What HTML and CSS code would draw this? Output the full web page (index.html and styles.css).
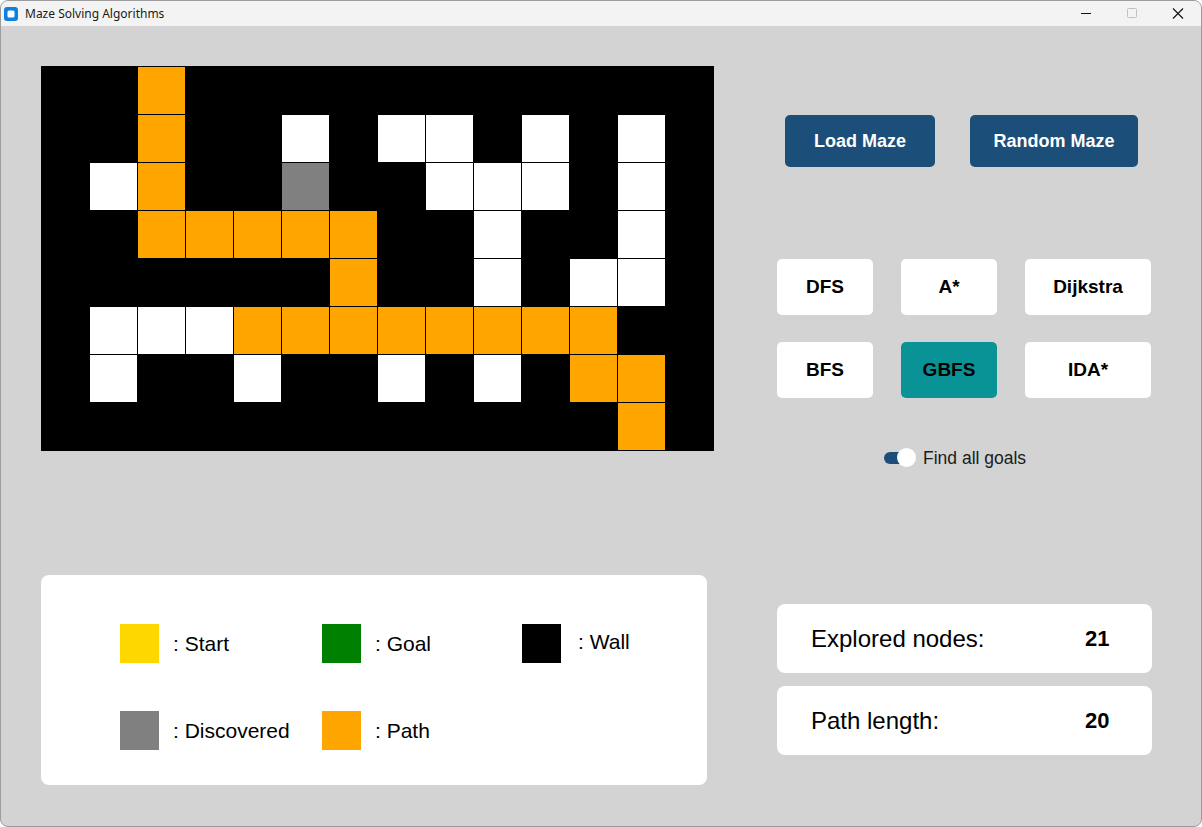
FILE: index.html
```html
<!DOCTYPE html>
<html>
<head>
<meta charset="utf-8">
<title>Maze Solving Algorithms</title>
<link rel="stylesheet" href="styles.css">
</head>
<body>
<div class="window">
  <div class="titlebar">
    <div class="app">
      <svg class="app-icon" width="14" height="14" viewBox="0 0 14 14">
        <rect x="0" y="0" width="14" height="14" rx="3" fill="#0f7fe0"/>
        <rect x="3.5" y="3.5" width="7" height="7" rx="1.5" fill="#ffffff"/>
      </svg>
      <span class="app-title">Maze Solving Algorithms</span>
    </div>
    <div class="controls">
      <svg class="ctl" width="46" height="25" viewBox="0 0 46 25"><line x1="18" y1="12.5" x2="28" y2="12.5" stroke="#111" stroke-width="1"/></svg>
      <svg class="ctl" width="46" height="25" viewBox="0 0 46 25"><rect x="18.5" y="7.5" width="9" height="9" rx="1" fill="none" stroke="#c2c2c2" stroke-width="1"/></svg>
      <svg class="ctl" width="46" height="25" viewBox="0 0 46 25"><path d="M18 7.5 L28 17.5 M28 7.5 L18 17.5" stroke="#111" stroke-width="1.1"/></svg>
    </div>
  </div>
  <div class="content">
    <div class="left">
      <div class="maze">
        <div class="c b"></div><div class="c b"></div><div class="c o"></div><div class="c b"></div><div class="c b"></div><div class="c b"></div><div class="c b"></div><div class="c b"></div><div class="c b"></div><div class="c b"></div><div class="c b"></div><div class="c b"></div><div class="c b"></div><div class="c b"></div>
        <div class="c b"></div><div class="c b"></div><div class="c o"></div><div class="c b"></div><div class="c b"></div><div class="c w"></div><div class="c b"></div><div class="c w"></div><div class="c w"></div><div class="c b"></div><div class="c w"></div><div class="c b"></div><div class="c w"></div><div class="c b"></div>
        <div class="c b"></div><div class="c w"></div><div class="c o"></div><div class="c b"></div><div class="c b"></div><div class="c g"></div><div class="c b"></div><div class="c b"></div><div class="c w"></div><div class="c w"></div><div class="c w"></div><div class="c b"></div><div class="c w"></div><div class="c b"></div>
        <div class="c b"></div><div class="c b"></div><div class="c o"></div><div class="c o"></div><div class="c o"></div><div class="c o"></div><div class="c o"></div><div class="c b"></div><div class="c b"></div><div class="c w"></div><div class="c b"></div><div class="c b"></div><div class="c w"></div><div class="c b"></div>
        <div class="c b"></div><div class="c b"></div><div class="c b"></div><div class="c b"></div><div class="c b"></div><div class="c b"></div><div class="c o"></div><div class="c b"></div><div class="c b"></div><div class="c w"></div><div class="c b"></div><div class="c w"></div><div class="c w"></div><div class="c b"></div>
        <div class="c b"></div><div class="c w"></div><div class="c w"></div><div class="c w"></div><div class="c o"></div><div class="c o"></div><div class="c o"></div><div class="c o"></div><div class="c o"></div><div class="c o"></div><div class="c o"></div><div class="c o"></div><div class="c b"></div><div class="c b"></div>
        <div class="c b"></div><div class="c w"></div><div class="c b"></div><div class="c b"></div><div class="c w"></div><div class="c b"></div><div class="c b"></div><div class="c w"></div><div class="c b"></div><div class="c w"></div><div class="c b"></div><div class="c o"></div><div class="c o"></div><div class="c b"></div>
        <div class="c b"></div><div class="c b"></div><div class="c b"></div><div class="c b"></div><div class="c b"></div><div class="c b"></div><div class="c b"></div><div class="c b"></div><div class="c b"></div><div class="c b"></div><div class="c b"></div><div class="c b"></div><div class="c o"></div><div class="c b"></div>
      </div>
      <div class="legend">
        <div class="item"><span class="sw start"></span><span class="lbl">: Start</span></div>
        <div class="item"><span class="sw goal"></span><span class="lbl">: Goal</span></div>
        <div class="item"><span class="sw wall"></span><span class="lbl lbl-up">: Wall</span></div>
        <div class="item"><span class="sw disc"></span><span class="lbl">: Discovered</span></div>
        <div class="item"><span class="sw path"></span><span class="lbl">: Path</span></div>
      </div>
    </div>
    <div class="right">
      <div class="top-buttons">
        <button class="btn-primary load">Load Maze</button>
        <button class="btn-primary random">Random Maze</button>
      </div>
      <div class="algos">
        <button class="algo">DFS</button>
        <button class="algo">A*</button>
        <button class="algo">Dijkstra</button>
        <button class="algo">BFS</button>
        <button class="algo active">GBFS</button>
        <button class="algo">IDA*</button>
      </div>
      <div class="toggle-row">
        <span class="toggle"><span class="knob"></span></span>
        <span class="toggle-label">Find all goals</span>
      </div>
      <div class="stats">
        <div class="card"><span class="card-label">Explored nodes:</span><span class="card-value">21</span></div>
        <div class="card"><span class="card-label">Path length:</span><span class="card-value">20</span></div>
      </div>
    </div>
  </div>
</div>
</body>
</html>
```
FILE: styles.css
```css
* { box-sizing: border-box; }
html, body { margin: 0; padding: 0; background: #ffffff; }
body { font-family: "Liberation Sans", Arial, sans-serif; }

.window {
  width: 1202px;
  height: 827px;
  border: 1px solid #9c9c9c;
  border-radius: 8px;
  overflow: hidden;
  background: #d3d3d3;
}

.titlebar {
  height: 25px;
  background: #f3f3f3;
  display: flex;
  justify-content: space-between;
  align-items: center;
}
.app { display: flex; align-items: center; padding-left: 3px; gap: 7px; }
.app-icon { display: block; }
.app-title {
  font-family: "Segoe UI", "Noto Sans", "Open Sans", sans-serif;
  font-size: 12px;
  color: #1a1a1a;
}
.controls { display: flex; align-items: center; }
.ctl { display: block; }

.content {
  display: flex;
  padding: 40px 0 0 40px;
}

.left { display: flex; flex-direction: column; width: 673px; }

.maze {
  display: grid;
  grid-template-columns: repeat(14, 47px);
  grid-auto-rows: 47px;
  gap: 1px;
  padding: 1px;
  background: #000;
  width: 673px;
}
.c.b { background: #000; }
.c.w { background: #ffffff; }
.c.o { background: #ffa500; }
.c.g { background: #808080; }

.legend {
  margin-top: 124px;
  width: 666px;
  height: 210px;
  background: #fff;
  border-radius: 8px;
  padding: 49px 0 0 79px;
  display: grid;
  grid-template-columns: 202px 200px auto;
  grid-auto-rows: 39px;
  row-gap: 48px;
}
.item { display: flex; align-items: center; gap: 14px; }
.sw { width: 39px; height: 39px; display: block; }
.sw.start { background: #ffd700; }
.sw.goal { background: #008000; }
.sw.wall { background: #000; }
.sw.disc { background: #808080; }
.sw.path { background: #ffa500; }
.lbl { font-size: 21px; color: #000; }
.lbl-up { position: relative; top: -2px; margin-left: 3px; }

.right {
  margin-left: 63px;
  width: 375px;
  display: flex;
  flex-direction: column;
}

button {
  font-family: "Liberation Sans", Arial, sans-serif;
  border: none;
  padding: 0;
  cursor: pointer;
}

.top-buttons {
  display: flex;
  gap: 35px;
  margin-top: 49px;
  padding-left: 8px;
}
.btn-primary {
  height: 52px;
  background: #1b4e78;
  color: #fff;
  font-weight: bold;
  font-size: 18px;
  border-radius: 5px;
}
.btn-primary.load { width: 150px; }
.btn-primary.random { width: 168px; }

.algos {
  display: grid;
  grid-template-columns: 96px 96px 126px;
  grid-auto-rows: 56px;
  column-gap: 28px;
  row-gap: 27px;
  margin-top: 92px;
}
.algo {
  background: #fff;
  color: #000;
  font-weight: bold;
  font-size: 19px;
  border-radius: 5px;
}
.algo.active { background: #0a9396; }

.toggle-row {
  display: flex;
  align-items: center;
  gap: 7px;
  margin-top: 50px;
  padding-left: 107px;
  height: 20px;
}
.toggle {
  position: relative;
  width: 32px;
  height: 20px;
  display: block;
}
.toggle::before {
  content: "";
  position: absolute;
  left: 0;
  top: 4px;
  width: 24px;
  height: 12px;
  border-radius: 6px;
  background: #1b4e78;
}
.knob {
  position: absolute;
  right: 0;
  top: 0;
  width: 19px;
  height: 19px;
  border-radius: 50%;
  background: #fff;
}
.toggle-label { font-size: 17.5px; color: #1a1a1a; }

.stats {
  margin-top: 136px;
  display: flex;
  flex-direction: column;
  gap: 13px;
}
.card {
  height: 69px;
  background: #fff;
  border-radius: 8px;
  display: grid;
  grid-template-columns: 274px auto;
  align-items: center;
  padding-left: 34px;
}
.card-label { font-size: 24px; color: #000; }
.card-value { font-size: 22px; font-weight: bold; color: #000; }
```
